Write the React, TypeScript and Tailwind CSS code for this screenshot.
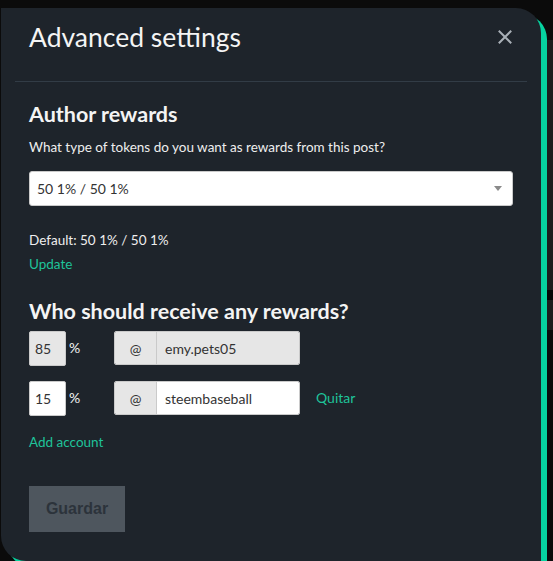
import React from "react";

const font = { fontFamily: '"Source Sans Pro", Lato, "Noto Sans", sans-serif' };

function CloseIcon() {
  return (
    <svg width="14" height="14" viewBox="0 0 14 14" className="block">
      <path d="M1.5 1.5 L12.5 12.5 M12.5 1.5 L1.5 12.5" stroke="#a9b0b7" strokeWidth="2" strokeLinecap="square" />
    </svg>
  );
}

function PercentInput({ value, disabled }: { value: string; disabled?: boolean }) {
  return (
    <div className="flex items-start w-[85px]">
      <div
        className={
          "w-[37px] h-[35px] rounded-[2px] border border-[#cacaca] flex items-center pl-[5px] text-[14px] text-[#333] " +
          (disabled ? "bg-[#e6e6e6]" : "bg-white")
        }
      >
        {value}
      </div>
      <span className="ml-[3px] mt-[6px] text-[14px] text-[#f4f4f4]">%</span>
    </div>
  );
}

function AccountInput({ name, disabled }: { name: string; disabled?: boolean }) {
  return (
    <div className="flex h-[34px] w-[186px] rounded-[2px] overflow-hidden border border-[#cacaca]">
      <div className="w-[42px] bg-[#e6e6e6] border-r border-[#cacaca] flex items-center justify-center text-[14px] text-[#333]">
        @
      </div>
      <div
        className={
          "flex-1 flex items-center pl-[8px] text-[14px] text-[#333] " +
          (disabled ? "bg-[#e6e6e6]" : "bg-white")
        }
      >
        {name}
      </div>
    </div>
  );
}

export default function App() {
  return (
    <div className="relative w-[553px] h-[561px] overflow-hidden bg-[#0b0b0b]" style={font}>
      {/* page content behind the overlay */}
      <div className="absolute left-[547px] top-[40px] w-[6px] h-[250px] bg-[#1d1d1d]" />
      <div className="absolute left-[547px] top-[290px] w-[6px] h-[10px] bg-[#050505]" />
      <div className="absolute left-[547px] top-[300px] w-[6px] h-[30px] bg-[#1d1d1d]" />

      <div className="absolute left-[1px] top-[8px] w-[540px] h-[553px] rounded-tr-[25px] rounded-bl-[25px] bg-[#1e242b] shadow-[6px_6px_0_#06d3a0]">
        <div className="flex items-start justify-between pl-[28px] pr-[29px] pt-[11px]">
          <h2 className="text-[26.5px] leading-[36px] text-[#f4f4f4] font-normal">Advanced settings</h2>
          <button className="mt-[11px]">
            <CloseIcon />
          </button>
        </div>
        <div className="ml-[14px] mr-[14px] mt-[26px] h-px bg-[#323c46]" />

        <div className="pl-[28px] pr-[28px]">
          <h3 className="mt-[19px] text-[21.5px] leading-[26px] font-bold text-[#f4f4f4]">Author rewards</h3>
          <p className="mt-[10px] text-[13.5px] leading-[20px] text-[#eeeeee]">
            What type of tokens do you want as rewards from this post?
          </p>
          <div className="mt-[14px] h-[35px] w-[484px] rounded-[3px] bg-white border border-[#cacaca] flex items-center justify-between pl-[7px] pr-[10px]">
            <span className="text-[14px] text-[#333]">50 1% / 50 1%</span>
            <svg width="8" height="5" viewBox="0 0 8 5">
              <path d="M0 0 L8 0 L4 5 Z" fill="#8a8a8a" />
            </svg>
          </div>
          <p className="mt-[24px] text-[13.5px] leading-[20px] text-[#eeeeee]">Default: 50 1% / 50 1%</p>
          <p className="mt-[4px] text-[13.5px] leading-[20px] text-[#1fc39a]">Update</p>

          <h3 className="mt-[24px] text-[21.5px] leading-[26px] font-bold text-[#f4f4f4]">Who should receive any rewards?</h3>

          <div className="mt-[7px] flex items-start">
            <PercentInput value="85" disabled />
            <AccountInput name="emy.pets05" disabled />
          </div>
          <div className="mt-[15px] flex items-start">
            <PercentInput value="15" />
            <AccountInput name="steembaseball" />
            <span className="ml-[16px] mt-[6px] text-[14px] text-[#1fc39a]">Quitar</span>
          </div>

          <p className="mt-[16px] text-[13.5px] leading-[20px] text-[#1fc39a]">Add account</p>

          <button
            className="mt-[34px] w-[96px] h-[46px] bg-[#4e565e] text-[#2c333b] text-[16px] font-bold"
            style={{ fontFamily: '"Liberation Sans", Arial, sans-serif' }}
          >
            Guardar
          </button>
        </div>
      </div>
    </div>
  );
}
